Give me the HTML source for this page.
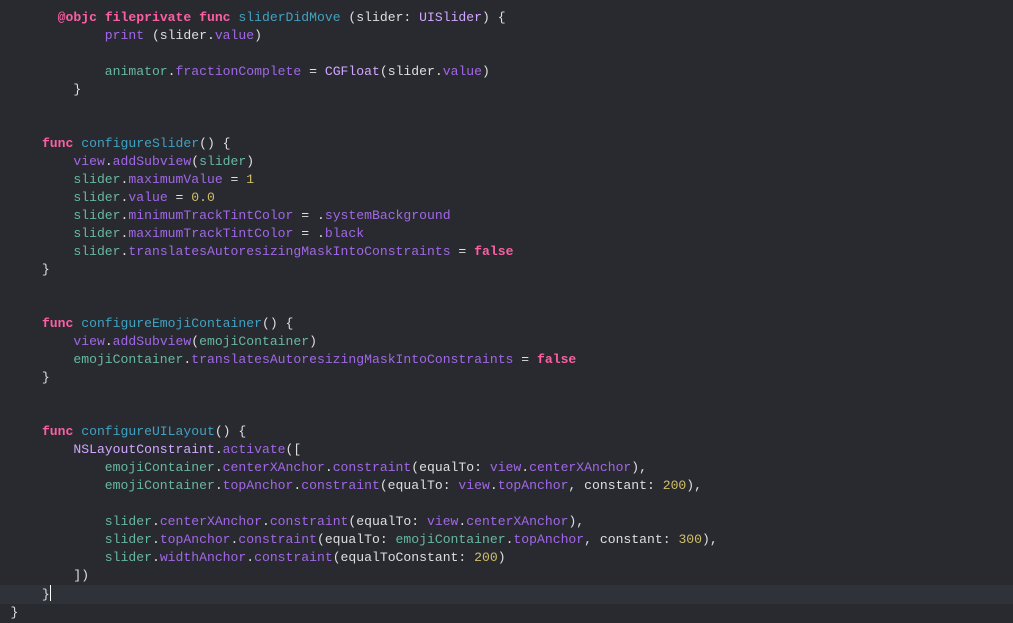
<!DOCTYPE html>
<html><head><meta charset="utf-8"><style>
html,body{margin:0;padding:0;background:#292a30;width:1013px;height:623px;overflow:hidden}
pre{margin:0;position:absolute;left:10.5px;top:9px;font-family:"Liberation Mono",monospace;font-size:13.1px;line-height:18px;color:#dfdfe0}
.hl{position:absolute;left:0;top:585px;width:1013px;height:19px;background:#30323a}
.k{color:#fc5fa3;font-weight:bold}
.d{color:#41a1c0}
.t{color:#d0a8ff}
.p{color:#a167e6}
.v{color:#67b7a4}
.n{color:#d0bf69}
.c{display:inline-block;width:1px;height:16px;background:#fff;vertical-align:-3px}
</style></head><body>
<div class="hl"></div>
<pre>      <span class="k">@objc</span> <span class="k">fileprivate</span> <span class="k">func</span> <span class="d">sliderDidMove</span> (slider: <span class="t">UISlider</span>) {
            <span class="p">print</span> (slider.<span class="p">value</span>)

            <span class="v">animator</span>.<span class="p">fractionComplete</span> = <span class="t">CGFloat</span>(slider.<span class="p">value</span>)
        }


    <span class="k">func</span> <span class="d">configureSlider</span>() {
        <span class="p">view</span>.<span class="p">addSubview</span>(<span class="v">slider</span>)
        <span class="v">slider</span>.<span class="p">maximumValue</span> = <span class="n">1</span>
        <span class="v">slider</span>.<span class="p">value</span> = <span class="n">0.0</span>
        <span class="v">slider</span>.<span class="p">minimumTrackTintColor</span> = .<span class="p">systemBackground</span>
        <span class="v">slider</span>.<span class="p">maximumTrackTintColor</span> = .<span class="p">black</span>
        <span class="v">slider</span>.<span class="p">translatesAutoresizingMaskIntoConstraints</span> = <span class="k">false</span>
    }


    <span class="k">func</span> <span class="d">configureEmojiContainer</span>() {
        <span class="p">view</span>.<span class="p">addSubview</span>(<span class="v">emojiContainer</span>)
        <span class="v">emojiContainer</span>.<span class="p">translatesAutoresizingMaskIntoConstraints</span> = <span class="k">false</span>
    }


    <span class="k">func</span> <span class="d">configureUILayout</span>() {
        <span class="t">NSLayoutConstraint</span>.<span class="p">activate</span>([
            <span class="v">emojiContainer</span>.<span class="p">centerXAnchor</span>.<span class="p">constraint</span>(equalTo: <span class="p">view</span>.<span class="p">centerXAnchor</span>),
            <span class="v">emojiContainer</span>.<span class="p">topAnchor</span>.<span class="p">constraint</span>(equalTo: <span class="p">view</span>.<span class="p">topAnchor</span>, constant: <span class="n">200</span>),

            <span class="v">slider</span>.<span class="p">centerXAnchor</span>.<span class="p">constraint</span>(equalTo: <span class="p">view</span>.<span class="p">centerXAnchor</span>),
            <span class="v">slider</span>.<span class="p">topAnchor</span>.<span class="p">constraint</span>(equalTo: <span class="v">emojiContainer</span>.<span class="p">topAnchor</span>, constant: <span class="n">300</span>),
            <span class="v">slider</span>.<span class="p">widthAnchor</span>.<span class="p">constraint</span>(equalToConstant: <span class="n">200</span>)
        ])
    }<span class="c"></span>
}</pre>
</body></html>
